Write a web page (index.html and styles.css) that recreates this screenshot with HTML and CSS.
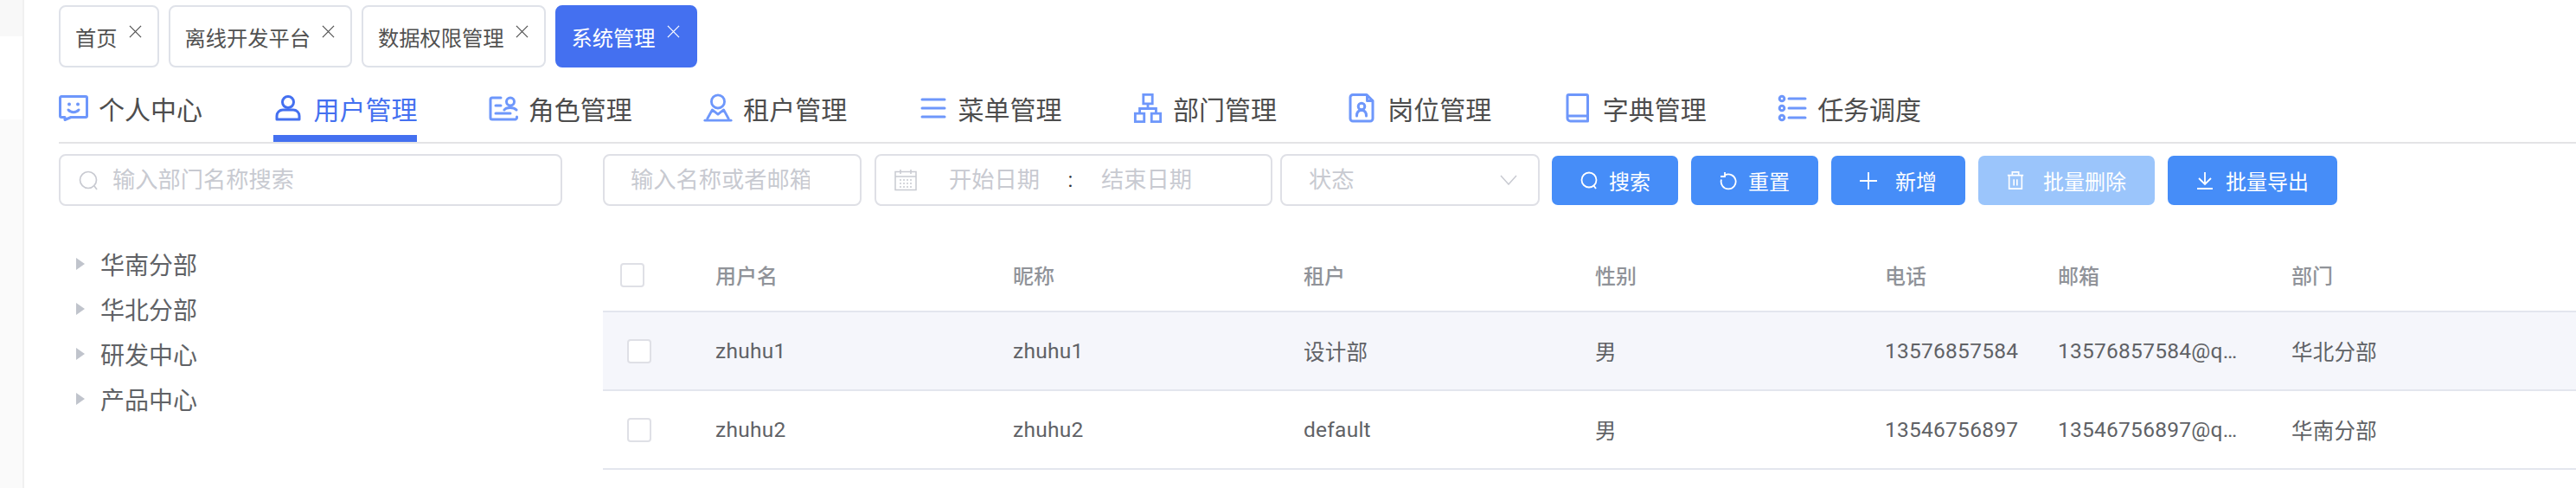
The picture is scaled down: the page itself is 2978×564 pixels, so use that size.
FILE: index.html
```html
<!DOCTYPE html>
<html lang="zh-CN">
<head>
    <meta charset="UTF-8">
    <title>系统管理</title>
    <link rel="stylesheet" href="styles.css">
</head>
<body>
    <!-- collapsed side menu strip -->
    <div class="side">
        <div class="side-top"></div>
        <div class="side-gap"></div>
        <div class="side-rest"></div>
    </div>

    <div class="main">
        <div class="tags">
            <div class="tag">首页<svg class="tag-x" viewBox="0 0 16 16"><path d="M1 1l14 14M15 1L1 15"/></svg></div>
            <div class="tag">离线开发平台<svg class="tag-x" viewBox="0 0 16 16"><path d="M1 1l14 14M15 1L1 15"/></svg></div>
            <div class="tag">数据权限管理<svg class="tag-x" viewBox="0 0 16 16"><path d="M1 1l14 14M15 1L1 15"/></svg></div>
            <div class="tag active">系统管理<svg class="tag-x" viewBox="0 0 16 16"><path d="M1 1l14 14M15 1L1 15"/></svg></div>
        </div>

        <div class="tabs">
            <div class="tab">
                <svg class="tab-icon" viewBox="0 0 34 30"><path d="M3 1.500h28a1.500 1.500 0 0 1 1.500 1.500v21a1.500 1.500 0 0 1-1.500 1.500H14l-7 3v-3H3a1.500 1.500 0 0 1-1.500-1.500V3A1.500 1.500 0 0 1 3 1.500z"/><path d="M11 17c3 3.500 9 3.500 12 0"/><circle class="dot" cx="12" cy="10.500" r="2"/><circle class="dot" cx="22" cy="10.500" r="2"/></svg>
                个人中心
            </div>
            <div class="tab active">
                <svg class="tab-icon" viewBox="0 0 34 30"><circle cx="17" cy="8" r="6.500"/><path d="M4 28v-4a7 7 0 0 1 7-7h12a7 7 0 0 1 7 7v4z"/></svg>
                用户管理
            </div>
            <div class="tab">
                <svg class="tab-icon" viewBox="0 0 34 30"><path d="M14 3H4a2 2 0 0 0-2 2v21a2 2 0 0 0 2 2h27a2 2 0 0 0 1.500-2v-1"/><path d="M8 12h6M8 21h17"/><circle cx="25" cy="7.500" r="4.500"/><path d="M18 17c2-3.500 11-3.500 14 0"/></svg>
                角色管理
            </div>
            <div class="tab">
                <svg class="tab-icon" viewBox="0 0 34 36"><circle cx="17" cy="10" r="8"/><path d="M4 31l6-11 7 5.500 7-5.500 6 11"/><path d="M1 33h32"/></svg>
                租户管理
            </div>
            <div class="tab">
                <svg class="tab-icon" viewBox="0 0 34 30"><path d="M4 5h26M4 15h26M4 25h26"/></svg>
                菜单管理
            </div>
            <div class="tab">
                <svg class="tab-icon" viewBox="0 0 34 36"><path class="sq" d="M11.500 1.500h11v11h-11zM1.500 24.500h11v10h-11zM21.500 24.500h11v10h-11z"/><path class="sq" d="M17 12.500v6M7 24v-5.500h20V24"/></svg>
                部门管理
            </div>
            <div class="tab">
                <svg class="tab-icon" viewBox="0 0 34 34"><path d="M6 1.500h16l7 7V29a3 3 0 0 1-3 3H6a3 3 0 0 1-3-3V4.500a3 3 0 0 1 3-3z"/><path d="M22.500 2.500v6h6"/><circle cx="16" cy="15" r="3.800"/><path d="M10.500 26c0-4 2-6.500 5.500-6.500s5.500 2.500 5.500 6.500"/></svg>
                岗位管理
            </div>
            <div class="tab">
                <svg class="tab-icon" viewBox="0 0 34 34"><path d="M7 1.500h20a1.500 1.500 0 0 1 1.500 1.500v29h-20a3.500 3.500 0 0 1-3.500-3.500V3a1.500 1.500 0 0 1 1.500-1.500z"/><path d="M5.500 26h23"/></svg>
                字典管理
            </div>
            <div class="tab">
                <svg class="tab-icon" viewBox="0 0 34 30"><circle cx="5" cy="4" r="2.800"/><circle cx="5" cy="15" r="2.800"/><circle cx="5" cy="26" r="2.800"/><path d="M13 4h19M13 15h19M13 26h19"/></svg>
                任务调度
            </div>
        </div>

        <div class="content">
            <div class="dept">
                <div class="field dept-search">
                    <svg class="field-icon" viewBox="0 0 24 24"><circle cx="11" cy="11" r="9.500"/><path d="M18 18l3 4"/></svg>
                    <input class="field-input" placeholder="输入部门名称搜索">
                </div>
                <div class="tree">
                    <div class="tree-row"><span class="tree-arrow"></span>华南分部</div>
                    <div class="tree-row"><span class="tree-arrow"></span>华北分部</div>
                    <div class="tree-row"><span class="tree-arrow"></span>研发中心</div>
                    <div class="tree-row"><span class="tree-arrow"></span>产品中心</div>
                </div>
            </div>

            <div class="users">
                <div class="toolbar">
                    <div class="field user-search"><input class="field-input" placeholder="输入名称或者邮箱"></div>
                    <div class="field date-range">
                        <svg class="date-icon" viewBox="0 0 26 26"><path d="M1 3.500h24v21H1zM7 1v5M19 1v5M1 9h24"/><path class="date-dots" d="M6 13h14M6 17h14M6 21h14"/></svg>
                        <input class="field-input date-input" placeholder="开始日期">
                        <span class="date-sep">:</span>
                        <input class="field-input date-input" placeholder="结束日期">
                    </div>
                    <div class="field status">
                        <input class="field-input" placeholder="状态">
                        <svg class="status-arrow" viewBox="0 0 20 12"><path d="M1 1l9 10 9-10"/></svg>
                    </div>
                    <div class="btn btn-search"><svg class="btn-icon" viewBox="0 0 20 22"><circle cx="10" cy="10" r="8.500"/><path d="M15 16l3 4"/></svg>搜索</div>
                    <div class="btn btn-reset"><svg class="btn-icon" viewBox="0 0 20 22"><path d="M6 4.500a8.500 8.500 0 1 1-4 5"/><path d="M6 1v5H1"/></svg>重置</div>
                    <div class="btn btn-add"><svg class="btn-icon" viewBox="0 0 20 20"><path d="M10 0v20M0 10h20"/></svg>新增</div>
                    <div class="btn btn-del disabled"><svg class="btn-icon" viewBox="0 0 20 24"><path d="M0 5h20M6 5V1h8v4M2 5v17h16V5M8 10v8M12 10v8"/></svg>批量删除</div>
                    <div class="btn btn-export"><svg class="btn-icon" viewBox="0 0 20 22"><path d="M10 1v13M3 8l7 7 7-7M1 20h18"/></svg>批量导出</div>
                </div>

                <table class="user-table">
                    <colgroup>
                        <col class="c-check"><col class="c-name"><col class="c-nick"><col class="c-tenant"><col class="c-sex"><col class="c-phone"><col class="c-mail"><col>
                    </colgroup>
                    <thead>
                        <tr>
                            <th class="check-head"><span class="check"></span></th>
                            <th>用户名</th><th>昵称</th><th>租户</th><th>性别</th><th>电话</th><th>邮箱</th><th>部门</th>
                        </tr>
                    </thead>
                    <tbody>
                        <tr class="hover">
                            <td class="check-cell"><span class="check"></span></td>
                            <td>zhuhu1</td><td>zhuhu1</td><td>设计部</td><td>男</td><td>13576857584</td>
                            <td><div class="mail">13576857584@qq.com</div></td>
                            <td>华北分部</td>
                        </tr>
                        <tr>
                            <td class="check-cell"><span class="check"></span></td>
                            <td>zhuhu2</td><td>zhuhu2</td><td>default</td><td>男</td><td>13546756897</td>
                            <td><div class="mail">13546756897@qq.com</div></td>
                            <td>华南分部</td>
                        </tr>
                    </tbody>
                </table>
            </div>
        </div>
    </div>
</body>
</html>
```

FILE: styles.css
```css
* {
    box-sizing: border-box;
}
body {
    margin: 0;
    height: 564px;
    overflow: hidden;
    display: flex;
    background: #ffffff;
    font-family: Roboto, "Noto Sans CJK SC", sans-serif;
    color: #606266;
}

/* side strip */
.side {
    width: 28px;
    flex: none;
    display: flex;
    flex-direction: column;
    border-right: 2px solid #f0f0f0;
}
.side-top {
    height: 42px;
    background: #f8f8f8;
}
.side-gap {
    height: 96px;
}
.side-rest {
    flex: 1;
    background: #fafafa;
}

.main {
    flex: 1;
    min-width: 0;
    padding-left: 40px;
}

/* open page tags */
.tags {
    display: flex;
    gap: 11px;
    padding-top: 6px;
}
.tag {
    height: 72px;
    display: flex;
    align-items: center;
    gap: 13px;
    padding: 0 18px 0 17px;
    border: 2px solid #dfe2e9;
    border-radius: 8px;
    font-size: 24.250px;
    color: #515151;
}
.tag.active {
    background: #4470f0;
    border-color: #4470f0;
    color: #ffffff;
}
.tag-x {
    width: 15px;
    height: 15px;
    margin-top: -11px;
    fill: none;
    stroke: currentColor;
    stroke-width: 1.300;
}

/* module tabs */
.tabs {
    display: flex;
    gap: 82.400px;
    margin-top: 10px;
    border-bottom: 2px solid #e4e4e6;
}
.tab {
    height: 76px;
    width: 166px;
    display: flex;
    align-items: center;
    gap: 12px;
    padding-top: 6px;
    border-bottom: 8px solid transparent;
    font-size: 30px;
    white-space: nowrap;
    color: #4d4d4d;
}
.tab.active {
    color: #4470f0;
    border-bottom-color: #4470f0;
}
.tab-icon {
    width: 34px;
    height: 34px;
    flex: none;
    fill: none;
    stroke: #6e97fb;
    stroke-width: 3;
    stroke-linecap: round;
    stroke-linejoin: round;
}
.tab.active .tab-icon {
    stroke: #4470f0;
}
.tab-icon .dot {
    fill: #6e97fb;
    stroke: none;
}
.tab-icon .sq {
    stroke-linecap: butt;
    stroke-linejoin: miter;
}

.content {
    display: flex;
    gap: 47px;
    margin-top: 12px;
}

/* inputs */
.field {
    height: 60px;
    display: flex;
    align-items: center;
    border: 2px solid #dfe0e6;
    border-radius: 8px;
    background: #ffffff;
}
.field-input {
    flex: 1;
    width: 100%;
    min-width: 0;
    height: 100%;
    padding: 0;
    border: none;
    outline: none;
    background: transparent;
    font-family: inherit;
    font-size: 26.250px;
    color: #606266;
}
.field-input::placeholder {
    color: #c8cad1;
    opacity: 1;
}
.field-icon {
    width: 24px;
    height: 24px;
    margin: 2px 15px 0 21px;
    flex: none;
    fill: none;
    stroke: #c8cad1;
    stroke-width: 1.700;
}

/* department tree */
.dept {
    width: 582px;
    flex: none;
}
.tree {
    margin-top: 41px;
}
.tree-row {
    height: 52px;
    display: flex;
    align-items: center;
    padding-left: 20px;
    font-size: 28px;
    color: #606266;
}
.tree-arrow {
    width: 0;
    height: 0;
    margin-right: 18px;
    border-left: 10px solid #c0c4cc;
    border-top: 7.500px solid transparent;
    border-bottom: 7.500px solid transparent;
}

/* toolbar */
.users {
    flex: 1;
    min-width: 0;
}
.toolbar {
    display: flex;
    align-items: flex-start;
}
.user-search {
    width: 299px;
    padding: 0 58px 0 30px;
}
.date-range {
    width: 460px;
    margin-left: 15px;
    padding-left: 21px;
}
.date-icon {
    width: 26px;
    height: 26px;
    margin-right: 37px;
    flex: none;
    fill: none;
    stroke: #c8cad1;
    stroke-width: 1.500;
}
.date-dots {
    stroke-dasharray: 2 2;
}
.date-input {
    flex: none;
    width: 105px;
}
.date-sep {
    width: 71px;
    text-align: center;
    font-size: 24px;
    color: #303133;
}
.status {
    width: 300px;
    margin-left: 9px;
    padding: 0 24px 0 31px;
}
.status-arrow {
    width: 20px;
    height: 12px;
    flex: none;
    fill: none;
    stroke: #c8cad1;
    stroke-width: 1.500;
}

/* buttons */
.btn {
    height: 57px;
    margin-top: 2px;
    margin-left: 15px;
    display: flex;
    align-items: center;
    padding: 0 33px;
    border-radius: 7px;
    background: #468df8;
    color: #ffffff;
    font-size: 24px;
    white-space: nowrap;
}
.btn.disabled {
    background: #9bc5fb;
}
.btn-icon {
    width: 20px;
    height: 22px;
    flex: none;
    fill: none;
    stroke: #ffffff;
    stroke-width: 1.800;
}
.btn-search {
    gap: 13px;
    margin-left: 14px;
    padding-right: 32px;
}
.btn-reset {
    gap: 13px;
}
.btn-add {
    gap: 21px;
}
.btn-del {
    gap: 22px;
}
.btn-export {
    gap: 14px;
}

/* table */
.user-table {
    width: 2281px;
    margin-top: 31px;
    border-collapse: collapse;
    table-layout: fixed;
    font-size: 24.500px;
    letter-spacing: 0.250px;
}
.c-check {
    width: 130px;
}
.c-name {
    width: 344px;
}
.c-nick {
    width: 336px;
}
.c-tenant {
    width: 337px;
}
.c-sex {
    width: 335px;
}
.c-phone {
    width: 200px;
}
.c-mail {
    width: 270px;
}
.user-table th,
.user-table td {
    height: 91px;
    padding: 0;
    text-align: left;
    border-bottom: 2px solid #e3e6ee;
}
.user-table th {
    padding-top: 7px;
    font-size: 24px;
    font-weight: 500;
    letter-spacing: 0;
    color: #909399;
}
.user-table tr.hover td {
    background: #f5f6fb;
}
.user-table .check-head {
    padding-left: 20px;
}
.user-table .check-cell {
    padding-left: 28px;
}
.check {
    display: block;
    width: 28px;
    height: 28px;
    background: #ffffff;
    border: 2px solid #dfe0e6;
    border-radius: 4px;
}
.mail {
    width: 214px;
    overflow: hidden;
    white-space: nowrap;
    text-overflow: ellipsis;
}
```
